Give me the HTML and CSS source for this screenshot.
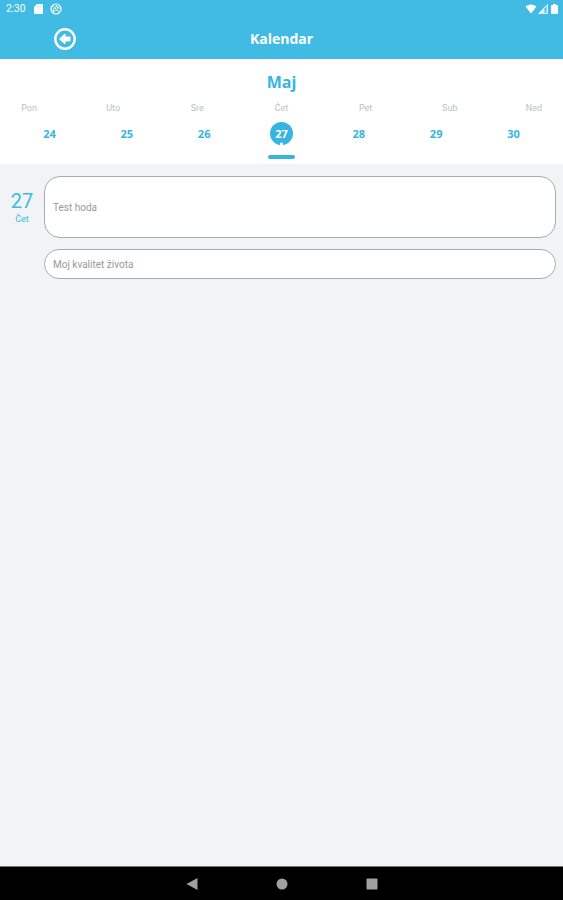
FILE: index.html
```html
<!DOCTYPE html>
<html lang="hr">
<head>
    <meta charset="UTF-8">
    <meta name="viewport" content="width=device-width, initial-scale=1.0">
    <title>Kalendar</title>
    <link rel="stylesheet" href="styles.css">
</head>
<body>
    <header class="top">
        <div class="status">
            <span class="time">2:30</span>
            <svg class="sd" width="9" height="10" viewBox="0 0 9 10"><path d="M3 0h5q1 0 1 1v8q0 1-1 1H1q-1 0-1-1V3z" fill="#fff"/><path d="M3.5 1.5v2M5.3 1.5v2M7.1 1.5v2" stroke="#a9dff2" stroke-width=".7"/></svg>
            <svg class="sync" width="12" height="12" viewBox="0 0 12 12" fill="none" stroke="#fff"><circle cx="6" cy="6" r="5" stroke-width="1.2"/><path d="M2.5 2.5l7 7M3 8.5C3.500 5 5 3.500 6.500 3.500S8.500 5 7 6.500 4 8 3 8.500M6 2.500l3.500 3" stroke-width="1"/></svg>
            <div class="signals">
                <svg width="12" height="10" viewBox="0 0 12 10"><path d="M.5 2.500Q6-1.500 11.500 2.500L6 9.500z" fill="#fff"/></svg>
                <svg width="10" height="10" viewBox="0 0 10 10"><path d="M9.500.5v9H.5z" fill="#fff" fill-opacity=".4" stroke="#fff" stroke-width=".7"/><path d="M6 4v5.500H.5z" fill="#fff" fill-opacity=".7"/><path d="M7.500 4v2.500M7.500 8v1" stroke="#41bbe3"/></svg>
                <svg width="7" height="10" viewBox="0 0 7 10"><path d="M2 0h3v1h1q1 0 1 1v7q0 1-1 1H1q-1 0-1-1V2q0-1 1-1h1z" fill="#fff"/></svg>
            </div>
        </div>
        <div class="bar">
            <button class="back" aria-label="Natrag">
                <svg width="22" height="22" viewBox="0 0 22 22"><circle cx="11" cy="11" r="9.700" fill="none" stroke="#fff" stroke-width="2.400"/><path d="M5.500 11L11 6v3h5v4h-5v3z" fill="#fff" stroke="#fff" stroke-width="1" stroke-linejoin="round"/></svg>
            </button>
            <h1>Kalendar</h1>
        </div>
    </header>

    <section class="week">
        <h2>Maj</h2>
        <div class="days">
            <span>Pon</span>
            <span>Uto</span>
            <span>Sre</span>
            <span>Čet</span>
            <span>Pet</span>
            <span>Sub</span>
            <span>Ned</span>
        </div>
        <div class="dates">
            <button>24</button>
            <button>25</button>
            <button>26</button>
            <button class="selected">27</button>
            <button>28</button>
            <button>29</button>
            <button>30</button>
        </div>
        <div class="knob"></div>
    </section>

    <main class="agenda">
        <div class="date">
            <span class="number">27</span>
            <span class="name">Čet</span>
        </div>
        <div class="events">
            <a class="event tall" href="#">Test hoda</a>
            <a class="event" href="#">Moj kvalitet života</a>
        </div>
    </main>

    <nav class="android">
        <button aria-label="Natrag"><svg width="12" height="14" viewBox="0 0 12 14"><path d="M0.500 7L11.500 1v12z" fill="#a0a0a0"/></svg></button>
        <button aria-label="Početna"><svg width="12" height="14" viewBox="0 0 12 14"><circle cx="6" cy="7" r="5.500" fill="#a0a0a0"/></svg></button>
        <button aria-label="Pregled"><svg width="12" height="14" viewBox="0 0 12 14"><rect x=".5" y="1.500" width="11" height="11" rx="1" fill="#a0a0a0"/></svg></button>
    </nav>
</body>
</html>
```

FILE: styles.css
```css
* {
    box-sizing: border-box;
}

body {
    margin: 0;
    min-height: 100vh;
    display: flex;
    flex-direction: column;
    background-color: #f1f3f5;
    font-family: Roboto, sans-serif;
}

button {
    border: 0;
    padding: 0;
    background: none;
    font: inherit;
    color: inherit;
}

svg {
    display: block;
}

/* Header */
.top {
    background-color: #41bbe3;
    color: #ffffff;
}

.status {
    display: flex;
    align-items: center;
    height: 18px;
    padding: 0 5px 0 6px;
}

.time {
    width: 28px;
    font-size: 10px;
    line-height: 18px;
}

.sync {
    margin-left: 7px;
}

.signals {
    display: flex;
    gap: 1px;
    margin-left: auto;
}

.signals svg:last-child {
    margin-left: 2px;
}

.bar {
    display: grid;
    grid-template-columns: 1fr auto 1fr;
    align-items: center;
    height: 41px;
}

.back {
    width: 22px;
    margin-left: 54px;
}

h1, h2 {
    margin: 0;
    font-family: "Open Sans", sans-serif;
    font-weight: 700;
    text-align: center;
}

h1 {
    font-size: 14px;
    line-height: 20px;
}

/* Week strip */
.week {
    height: 105px;
    padding-top: 11px;
    background-color: #ffffff;
}

h2 {
    font-size: 16px;
    line-height: 24px;
    color: #35b5df;
}

.days {
    display: flex;
    justify-content: space-between;
    padding: 0 18px;
    margin-top: 7px;
    font-size: 9px;
    line-height: 14px;
    color: #b9bfc5;
}

.days span {
    width: 22px;
    text-align: center;
}

.dates {
    display: flex;
    justify-content: space-between;
    padding: 0 38px;
    margin-top: 7px;
    font-family: "Open Sans", sans-serif;
    font-size: 11px;
    font-weight: 700;
    line-height: 22px;
    color: #35b5df;
}

.dates button {
    width: 23px;
    height: 23px;
    border-radius: 50%;
}

.dates .selected {
    background: radial-gradient(circle at 50% 22px, #ffffff 1px, #35b5df 2px);
    color: #ffffff;
}

.knob {
    width: 27px;
    height: 4px;
    margin: 10px auto 0;
    border-radius: 2px;
    background-color: #35b5df;
}

/* Agenda */
.agenda {
    flex: 1;
    display: flex;
    padding: 12px 7px 12px 0;
}

.date {
    width: 44px;
    padding-top: 13px;
    text-align: center;
    color: #41bbe3;
}

.date span {
    display: block;
}

.number {
    font-size: 20px;
    line-height: 24px;
}

.name {
    font-size: 9px;
    line-height: 12px;
}

.events {
    flex: 1;
    display: flex;
    flex-direction: column;
    gap: 11px;
}

.event {
    display: flex;
    align-items: center;
    height: 30px;
    padding: 0 8px;
    border: 1px solid #a5adb2;
    border-radius: 16px;
    background-color: #ffffff;
    font-size: 10px;
    color: #999999;
    text-decoration: none;
}

.tall {
    height: 62px;
}

/* System navigation */
.android {
    display: flex;
    justify-content: center;
    align-items: center;
    gap: 78px;
    height: 34px;
    border-top: 1px solid #777777;
    background-color: #000000;
}
```
